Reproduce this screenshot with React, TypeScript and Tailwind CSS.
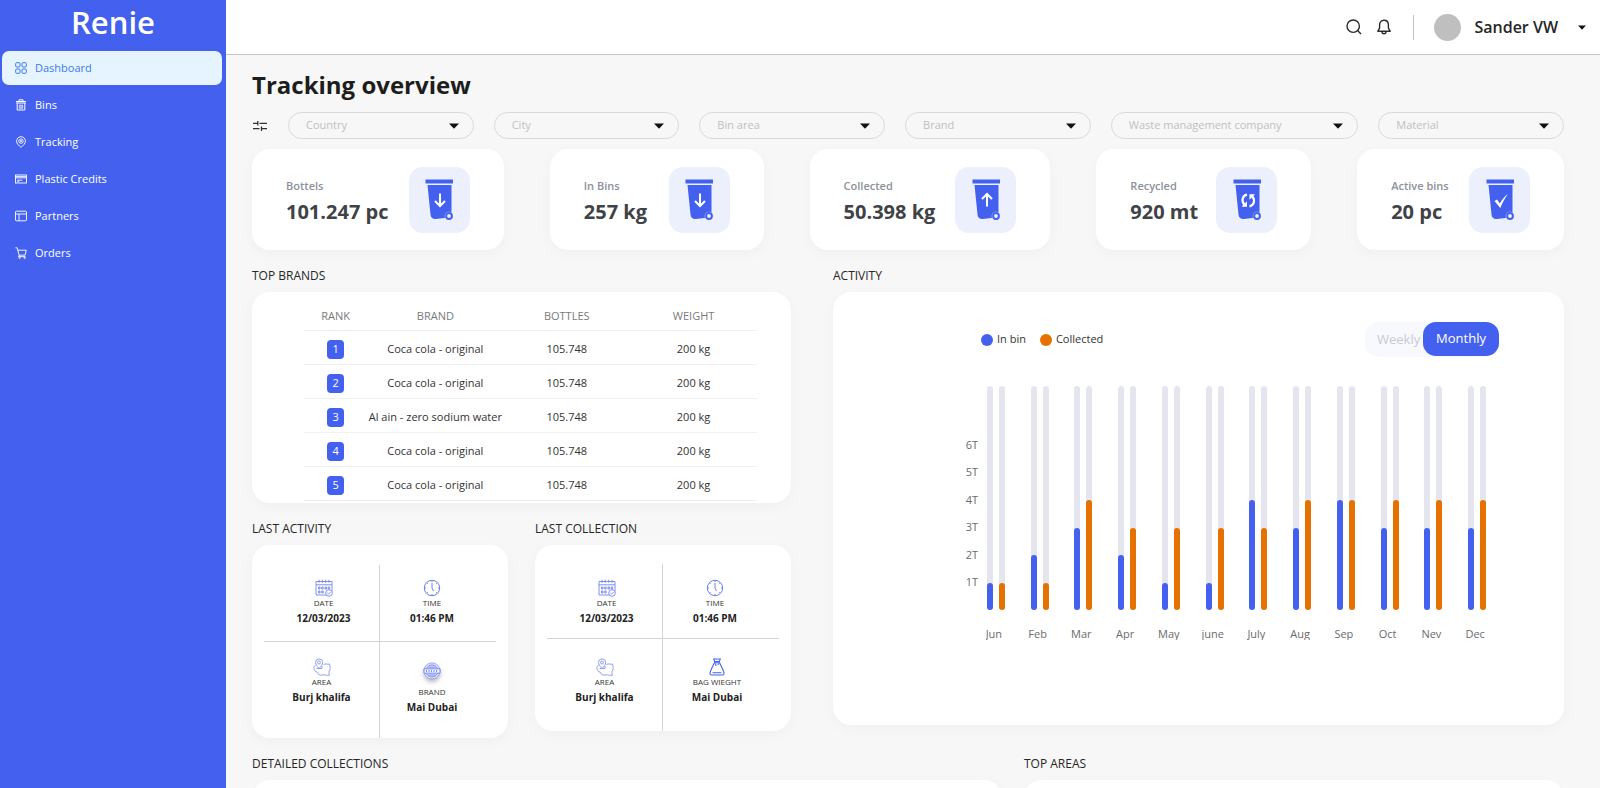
import React from "react";

type IconProps = { className?: string };

function DashboardIcon({ className }: IconProps) {
  return (
    <svg viewBox="0 0 12 12" className={className} fill="none" stroke="currentColor" strokeWidth="1">
      <rect x="0.7" y="0.7" width="4.3" height="4.3" rx="1" />
      <rect x="7" y="0.7" width="4.3" height="4.3" rx="1" />
      <rect x="0.7" y="7" width="4.3" height="4.3" rx="1" />
      <rect x="7" y="7" width="4.3" height="4.3" rx="1" />
    </svg>
  );
}

function BinsIcon({ className }: IconProps) {
  return (
    <svg viewBox="0 0 12 12" className={className} fill="none" stroke="currentColor" strokeWidth="1">
      <path d="M4 2V0.8h4V2M1 2.5h10M1.2 4h9.6" />
      <path d="M2.2 4v7h7.6V4" />
      <path d="M4.3 6.2h3.4v3H4.3zM6 6.2v3" strokeWidth="0.8" />
    </svg>
  );
}

function TrackingIcon({ className }: IconProps) {
  return (
    <svg viewBox="0 0 12 12" className={className} fill="none" stroke="currentColor" strokeWidth="0.9">
      <path d="M6 11.3C4 9.6 1.6 7.8 1.6 5.1a4.4 4.4 0 0 1 8.8 0C10.4 7.8 8 9.6 6 11.3z" />
      <circle cx="6" cy="5.1" r="2.2" />
      <circle cx="6" cy="5.1" r="0.7" />
    </svg>
  );
}

function CreditsIcon({ className }: IconProps) {
  return (
    <svg viewBox="0 0 12 12" className={className} fill="none" stroke="currentColor" strokeWidth="0.9">
      <rect x="0.5" y="2" width="11" height="8" />
      <path d="M0.5 3.6h11M0.5 4.8h11M2.2 7.2h5M2.2 8.3h2" />
    </svg>
  );
}

function PartnersIcon({ className }: IconProps) {
  return (
    <svg viewBox="0 0 12 12" className={className} fill="none" stroke="currentColor" strokeWidth="0.9">
      <rect x="0.5" y="1.2" width="11" height="9.6" rx="0.8" />
      <path d="M0.5 4h11M4 4v6.8" />
    </svg>
  );
}

function OrdersIcon({ className }: IconProps) {
  return (
    <svg viewBox="0 0 12 12" className={className} fill="none" stroke="currentColor" strokeWidth="0.9">
      <path d="M0.4 0.8h1.8l1.9 7.4h6l1.2-5H2.8" />
      <path d="M4.1 8.2L3.4 9.6h7" />
      <circle cx="4.6" cy="10.8" r="0.7" />
      <circle cx="9.6" cy="10.8" r="0.7" />
    </svg>
  );
}

function SearchIcon() {
  return (
    <svg viewBox="0 0 16 16" className="size-4" fill="none" stroke="#2b2b2b" strokeWidth="1.4">
      <circle cx="7.2" cy="7.2" r="6.2" />
      <path d="M11.6 11.6L15 15" />
    </svg>
  );
}

function BellIcon() {
  return (
    <svg viewBox="0 0 16 16" className="size-4" fill="none" stroke="#2b2b2b" strokeWidth="1.4" strokeLinejoin="round">
      <path d="M8 1.2c-2.7 0-4.400 2-4.400 4.600v3.400L1.800 12.200h12.400l-1.800-3V5.800C12.400 3.200 10.700 1.200 8 1.200z" />
      <path d="M6 12.600c0 1.300.8 2.200 2 2.200s2-.9 2-2.200" />
    </svg>
  );
}

function Caret({ className }: IconProps) {
  return (
    <svg viewBox="0 0 10 6" className={className} fill="#111">
      <path d="M0 0.5h10L5 5.7z" />
    </svg>
  );
}

function SlidersIcon() {
  return (
    <svg viewBox="-1 0 16 12" className="h-3 w-4 shrink-0" fill="none" stroke="#333" strokeWidth="1.3">
      <path d="M0 3.3h4.500M4.800 1v4.600M6.500 3.300H14M0 8.700h6.500M8.500 6.400V11M8.500 8.700H14" />
    </svg>
  );
}

type BinKind = "down" | "up" | "recycle" | "check";

function BinIcon({ kind }: { kind: BinKind }) {
  return (
    <svg viewBox="-0.5 -0.5 28 42" className="h-[42px] w-7">
      <rect x="0" y="0" width="27.5" height="4" fill="#4361ee" />
      <path d="M2 5.500h24v27.500l-3 5-12.500 1.500C7 39.800 5.300 38 5 35z" fill="#4361ee" />
      <circle cx="23.500" cy="36.500" r="4.300" fill="#ecf0fd" />
      <circle cx="23.500" cy="36.500" r="2.900" fill="none" stroke="#4361ee" strokeWidth="2" />
      {kind === "down" && (
        <path d="M14.500 14v12M9.500 21.500l5 5 5-5" fill="none" stroke="#fff" strokeWidth="2" />
      )}
      {kind === "up" && (
        <path d="M14.500 27V15M9.500 19.500l5-5 5 5" fill="none" stroke="#fff" strokeWidth="2" />
      )}
      {kind === "recycle" && (
        <g fill="none" stroke="#fff" strokeWidth="2.200">
          <path d="M13.500 15.200c-4.500.8-6 6-2.700 10M16 26.800c4.500-.8 6-6 2.700-10" />
          <path d="M8 27.300h5.500v-5.500zM21.500 14.700H16v5.500z" fill="#fff" stroke="none" />
        </g>
      )}
      {kind === "check" && (
        <path d="M8 21.500l2.500-1.500 2.800 4C15 20.500 18 17 21.500 14.500 18.500 18.500 16 23 13.800 28.500z" fill="#fff" />
      )}
    </svg>
  );
}

function CalendarIcon() {
  return (
    <svg viewBox="0 0 18 18" className="size-[18px]" fill="none" stroke="#7084f0" strokeWidth="0.900">
      <path d="M1 2.500h16v10M1 2.500V16h10.500M1 5.800h16" />
      <path d="M4 0.800v3M7.300 0.800v3M10.700 0.800v3M14 0.800v3" />
      <path d="M3.500 8h1.500v2H3.500zM6.700 8h1.500v2H6.700zM10 8h1.500v2H10zM13.200 8h1.500v2h-1.500zM3.500 12h1.500v2H3.500zM6.700 12h1.500v2H6.700z" />
      <circle cx="14" cy="14" r="3.300" fill="#fff" />
      <path d="M12.400 14l1.200 1.200 2-2.200" />
    </svg>
  );
}

function ClockIcon() {
  return (
    <svg viewBox="0 0 18 18" className="size-[18px]" fill="none" stroke="#6c80ef" strokeWidth="1">
      <circle cx="9" cy="9" r="7.700" />
      <path d="M9 4v5l1.500 3M9 1.500v1.500M9 15v1.500M1.500 9H3M15 9h1.500M3.700 3.700l1 1M14.300 3.700l-1 1M3.700 14.300l1-1M14.300 14.300l-1-1" />
    </svg>
  );
}

function AreaIcon() {
  return (
    <svg viewBox="0 0 18 18" className="size-[18px]" fill="none" stroke="#8494f2" strokeWidth="0.900">
      <path d="M6 10.500C4 8.300 2.500 6.500 2.500 4.500a3.600 3.600 0 0 1 7.200 0c0 2-1.700 3.800-3.700 6z" />
      <circle cx="6" cy="4.500" r="1.500" />
      <path d="M2.500 7.500C1 8 0.700 9 1 10.500c.5 2 1 3 3 3.500.8 2.500 3 3.500 5 3 2.500-.7 4.500.8 7.500.2-.3-2-1.500-3 .3-5.200.8-1.500.2-3.800-.3-6-2 .7-4-.7-6 .5M3.500 10.500h5.500V8" />
    </svg>
  );
}

function BrandIcon() {
  return (
    <svg viewBox="0 0 18 18" className="size-[18px] drop-shadow-[0_3px_2px_rgba(0,0,0,0.25)]" fill="none" stroke="#7084f0" strokeWidth="0.900">
      <circle cx="9" cy="9" r="8" fill="#dfe4fd" strokeDasharray="1.500 0.600" />
      <circle cx="9" cy="9" r="6" />
      <path d="M1 6.800h16v4.400H1z" fill="#eef1fe" />
      <path d="M3.500 8v2M6 8v2M8.500 8v2M11 8v2M13.500 8v2M5.500 5.200h7M5.500 13h7" />
    </svg>
  );
}

function BagIcon() {
  return (
    <svg viewBox="0 0 18 18" className="size-[18px]" fill="none" stroke="#4361ee" strokeWidth="1.100">
      <path d="M5.700 1h6.600l-1 2.500H6.700zM6 4.200h6" />
      <path d="M6.500 4.500C5.500 7.500 2.800 11 2 15c-.2 1.300.5 2 1.600 2h10.800c1.100 0 1.800-.7 1.600-2-.8-4-3.500-7.500-4.500-10.500M7.800 5v3M10.200 5v2M4.500 14.800h9" />
    </svg>
  );
}

const NAV = [
  { label: "Dashboard", Icon: DashboardIcon },
  { label: "Bins", Icon: BinsIcon },
  { label: "Tracking", Icon: TrackingIcon },
  { label: "Plastic Credits", Icon: CreditsIcon },
  { label: "Partners", Icon: PartnersIcon },
  { label: "Orders", Icon: OrdersIcon },
];

const FILTERS = ["Country", "City", "Bin area", "Brand", "Waste management company", "Material"];

const STATS: { label: string; value: string; kind: BinKind }[] = [
  { label: "Bottels", value: "101.247 pc", kind: "down" },
  { label: "In Bins", value: "257 kg", kind: "down" },
  { label: "Collected", value: "50.398 kg", kind: "up" },
  { label: "Recycled", value: "920 mt", kind: "recycle" },
  { label: "Active bins", value: "20 pc", kind: "check" },
];

const BRANDS = [
  "Coca cola - original",
  "Coca cola - original",
  "Al ain - zero sodium water",
  "Coca cola - original",
  "Coca cola - original",
];

const MONTHS: [string, number, number][] = [
  ["Jun", 1, 1],
  ["Feb", 2, 1],
  ["Mar", 3, 4],
  ["Apr", 2, 3],
  ["May", 1, 3],
  ["june", 1, 3],
  ["July", 4, 3],
  ["Aug", 3, 4],
  ["Sep", 4, 4],
  ["Oct", 3, 4],
  ["Nev", 3, 4],
  ["Dec", 3, 4],
];

const CARD = "rounded-[18px] bg-white shadow-[0_4px_14px_rgba(0,0,0,0.03)]";

function SectionTitle({ children }: { children: React.ReactNode }) {
  return <h2 className="mt-[18px] mb-2 text-[12px] leading-4 font-medium text-[#262626]">{children}</h2>;
}

function Sidebar() {
  return (
    <aside className="w-[226px] shrink-0 bg-[#4361ee] text-white">
      <div className="flex h-[51px] justify-center text-[31px] leading-[44px] font-semibold">Renie</div>
      <nav className="flex flex-col gap-[3px] pr-1 pl-0.5">
        {NAV.map(({ label, Icon }, i) => (
          <a
            key={label}
            href="#"
            className={
              i === 0
                ? "flex h-[34px] items-center gap-2 rounded-[7px] bg-[#e6f4ff] pl-[13px] text-[11px] text-[#3b7be8]"
                : "flex h-[34px] items-center gap-2 rounded-[7px] pl-[13px] text-[11px]"
            }
          >
            <Icon className="size-3" />
            {label}
          </a>
        ))}
      </nav>
    </aside>
  );
}

function Header() {
  return (
    <header className="flex h-[55px] items-center justify-end border-b border-[#c4c4c4] bg-white pr-3.5">
      <button aria-label="Search">
        <SearchIcon />
      </button>
      <button aria-label="Notifications" className="ml-3.5">
        <BellIcon />
      </button>
      <span className="ml-[21px] h-[25px] w-px bg-[#c4c4c4]" />
      <button className="ml-5 flex items-center text-[16px] font-semibold text-[#262626]">
        <span className="mr-[13px] size-[27px] rounded-full bg-[#bfbfbf]" />
        Sander VW
        <Caret className="ml-5 h-[5px] w-2" />
      </button>
    </header>
  );
}

function Filters() {
  return (
    <div className="mt-[11px] flex items-center gap-5">
      <SlidersIcon />
      <div className="grid flex-1 grid-cols-[186fr_186fr_186fr_186fr_248fr_186fr] gap-5">
        {FILTERS.map((name) => (
          <label key={name} className="flex h-[27px] items-center rounded-full border border-[#d9d9d9] pr-3.5 pl-[17px]">
            <select
              aria-label={name}
              className="min-w-0 flex-1 appearance-none bg-transparent text-[11px] text-[#bfbfbf] outline-none"
            >
              <option>{name}</option>
            </select>
            <Caret className="h-1.5 w-2.5" />
          </label>
        ))}
      </div>
    </div>
  );
}

function Stats() {
  return (
    <div className="mt-2.5 grid grid-cols-[252fr_214fr_241fr_215fr_207fr] gap-[46px]">
      {STATS.map((s) => (
        <div key={s.label} className={`${CARD} flex h-[101px] items-center justify-between px-[34px]`}>
          <div className="pt-1 whitespace-nowrap">
            <div className="text-[11px] leading-4 font-semibold text-[#8c919c]">{s.label}</div>
            <div className="mt-1 text-[20px] leading-7 font-bold text-[#3f4247]">{s.value}</div>
          </div>
          <div className="flex h-[66px] w-[61px] shrink-0 items-center justify-center rounded-[14px] bg-[#ecf0fd]">
            <BinIcon kind={s.kind} />
          </div>
        </div>
      ))}
    </div>
  );
}

function TopBrands() {
  return (
    <section>
      <SectionTitle>TOP BRANDS</SectionTitle>
      <div className={`${CARD} h-[211px] pt-2.5 pr-[34px] pl-[52px]`}>
        <table className="w-full table-fixed text-center text-[11px]">
          <colgroup>
            <col className="w-[14%]" />
            <col className="w-[30%]" />
            <col className="w-[28%]" />
            <col className="w-[28%]" />
          </colgroup>
          <thead>
            <tr className="h-7 border-b border-[#efefef] text-[#7a7a7a]">
              <th className="font-normal">RANK</th>
              <th className="font-normal">BRAND</th>
              <th className="font-normal">BOTTLES</th>
              <th className="font-normal">WEIGHT</th>
            </tr>
          </thead>
          <tbody className="text-[#333]">
            {BRANDS.map((brand, i) => (
              <tr key={i} className="h-[34px] border-b border-[#efefef]">
                <td className="pt-1">
                  <span className="mx-auto flex h-[19px] w-[17px] items-center justify-center rounded-[4px] bg-[#4361ee] text-white">
                    {i + 1}
                  </span>
                </td>
                <td className="pt-1 whitespace-nowrap">{brand}</td>
                <td className="pt-1">105.748</td>
                <td className="pt-1">200 kg</td>
              </tr>
            ))}
          </tbody>
        </table>
      </div>
    </section>
  );
}

function Fact({
  icon,
  label,
  value,
  className,
}: {
  icon: React.ReactNode;
  label: string;
  value: string;
  className: string;
}) {
  return (
    <div className={`flex flex-col items-center ${className}`}>
      {icon}
      <div className="text-[8px] leading-3 text-[#333]">{label}</div>
      <div className="text-[10px] leading-[18px] font-bold text-[#222]">{value}</div>
    </div>
  );
}

function LastActivity() {
  return (
    <section>
      <SectionTitle>LAST ACTIVITY</SectionTitle>
      <div className={`${CARD} px-3 pt-5`}>
        <div className="grid grid-cols-2 grid-rows-[77px_96px]">
          <Fact icon={<CalendarIcon />} label="DATE" value="12/03/2023" className="border-r border-b border-[#d4d4d4] pt-3.5 pl-1" />
          <Fact icon={<ClockIcon />} label="TIME" value="01:46 PM" className="border-b border-[#d4d4d4] pt-3.5 pr-3" />
          <Fact icon={<AreaIcon />} label="AREA" value="Burj khalifa" className="border-r border-[#d4d4d4] pt-4" />
          <Fact icon={<div className="mb-1.5"><BrandIcon /></div>} label="BRAND" value="Mai Dubai" className="pt-5 pr-3" />
        </div>
      </div>
    </section>
  );
}

function LastCollection() {
  return (
    <section>
      <SectionTitle>LAST COLLECTION</SectionTitle>
      <div className={`${CARD} px-3 pt-[19px]`}>
        <div className="grid grid-cols-2 grid-rows-[75px_92px]">
          <Fact icon={<CalendarIcon />} label="DATE" value="12/03/2023" className="border-r border-b border-[#d4d4d4] pt-[15px] pl-1" />
          <Fact icon={<ClockIcon />} label="TIME" value="01:46 PM" className="border-b border-[#d4d4d4] pt-[15px] pr-3" />
          <Fact icon={<AreaIcon />} label="AREA" value="Burj khalifa" className="border-r border-[#d4d4d4] pt-[19px]" />
          <Fact icon={<BagIcon />} label="BAG WIEGHT" value="Mai Dubai" className="pt-[19px] pr-2" />
        </div>
      </div>
    </section>
  );
}

function Bar({ value, className }: { value: number; className: string }) {
  return (
    <div className="flex h-full w-1.5 items-end rounded-full bg-[#e4e5ef]">
      <div className={`w-full rounded-full ${className}`} style={{ height: `${(value / 8.15) * 100}%` }} />
    </div>
  );
}

function Activity() {
  return (
    <section>
      <SectionTitle>ACTIVITY</SectionTitle>
      <div className={`${CARD} h-[433px] pt-[30px] pr-[65px] pl-[130px]`}>
        <div className="flex h-[35px] items-center text-[11px] text-[#333]">
          <span className="ml-[18px] size-3 rounded-full bg-[#4361ee]" />
          <span className="ml-1">In bin</span>
          <span className="ml-3.5 size-3 rounded-full bg-[#e57200]" />
          <span className="ml-1">Collected</span>
          <div className="ml-auto flex h-full rounded-[14px] bg-[#f8f9fe] text-[13px]">
            <button className="w-[58px] pl-3 text-left text-[#c8cad2]">Weekly</button>
            <button className="h-[34px] w-[76px] rounded-[13px] bg-[#4361ee] text-white">Monthly</button>
          </div>
        </div>
        <div className="mt-[29px] flex gap-2">
          <div className="pt-[45px] text-[11px] text-[#6b6b6b]">
            <div className="grid h-[165px] w-[15px] grid-rows-6">
              {[6, 5, 4, 3, 2, 1].map((n) => (
                <span key={n} className="flex items-center justify-end">
                  {n}T
                </span>
              ))}
            </div>
          </div>
          <div className="-ml-3 grid flex-1 grid-cols-12">
            {MONTHS.map(([month, bin, collected]) => (
              <div key={month} className="flex flex-col items-center">
                <div className="flex h-56 gap-1.5">
                  <Bar value={bin} className="bg-[#4361ee]" />
                  <Bar value={collected} className="bg-[#e57200]" />
                </div>
                <span className="mt-4 h-3.5 overflow-hidden pr-1 text-[11px] leading-4 text-[#6b6b6b]">{month}</span>
              </div>
            ))}
          </div>
        </div>
      </div>
    </section>
  );
}

export default function App() {
  return (
    <div className="flex h-screen overflow-hidden bg-[#f7f7f7] font-['Open_Sans',sans-serif]">
      <Sidebar />
      <div className="min-w-0 flex-1">
        <Header />
        <main className="pt-3.5 pr-9 pl-[26px]">
          <h1 className="text-[24px] leading-8 font-bold text-[#1d1d1d]">Tracking overview</h1>
          <Filters />
          <Stats />
          <div className="grid grid-cols-[539fr_731fr] gap-[42px]">
            <div>
              <TopBrands />
              <div className="grid grid-cols-2 items-start gap-[27px]">
                <LastActivity />
                <LastCollection />
              </div>
            </div>
            <Activity />
          </div>
          <div className="grid grid-cols-[750fr_540fr] gap-[22px]">
            <section>
              <SectionTitle>DETAILED COLLECTIONS</SectionTitle>
              <div className={`${CARD} h-60`} />
            </section>
            <section>
              <SectionTitle>TOP AREAS</SectionTitle>
              <div className={`${CARD} h-60`} />
            </section>
          </div>
        </main>
      </div>
    </div>
  );
}
